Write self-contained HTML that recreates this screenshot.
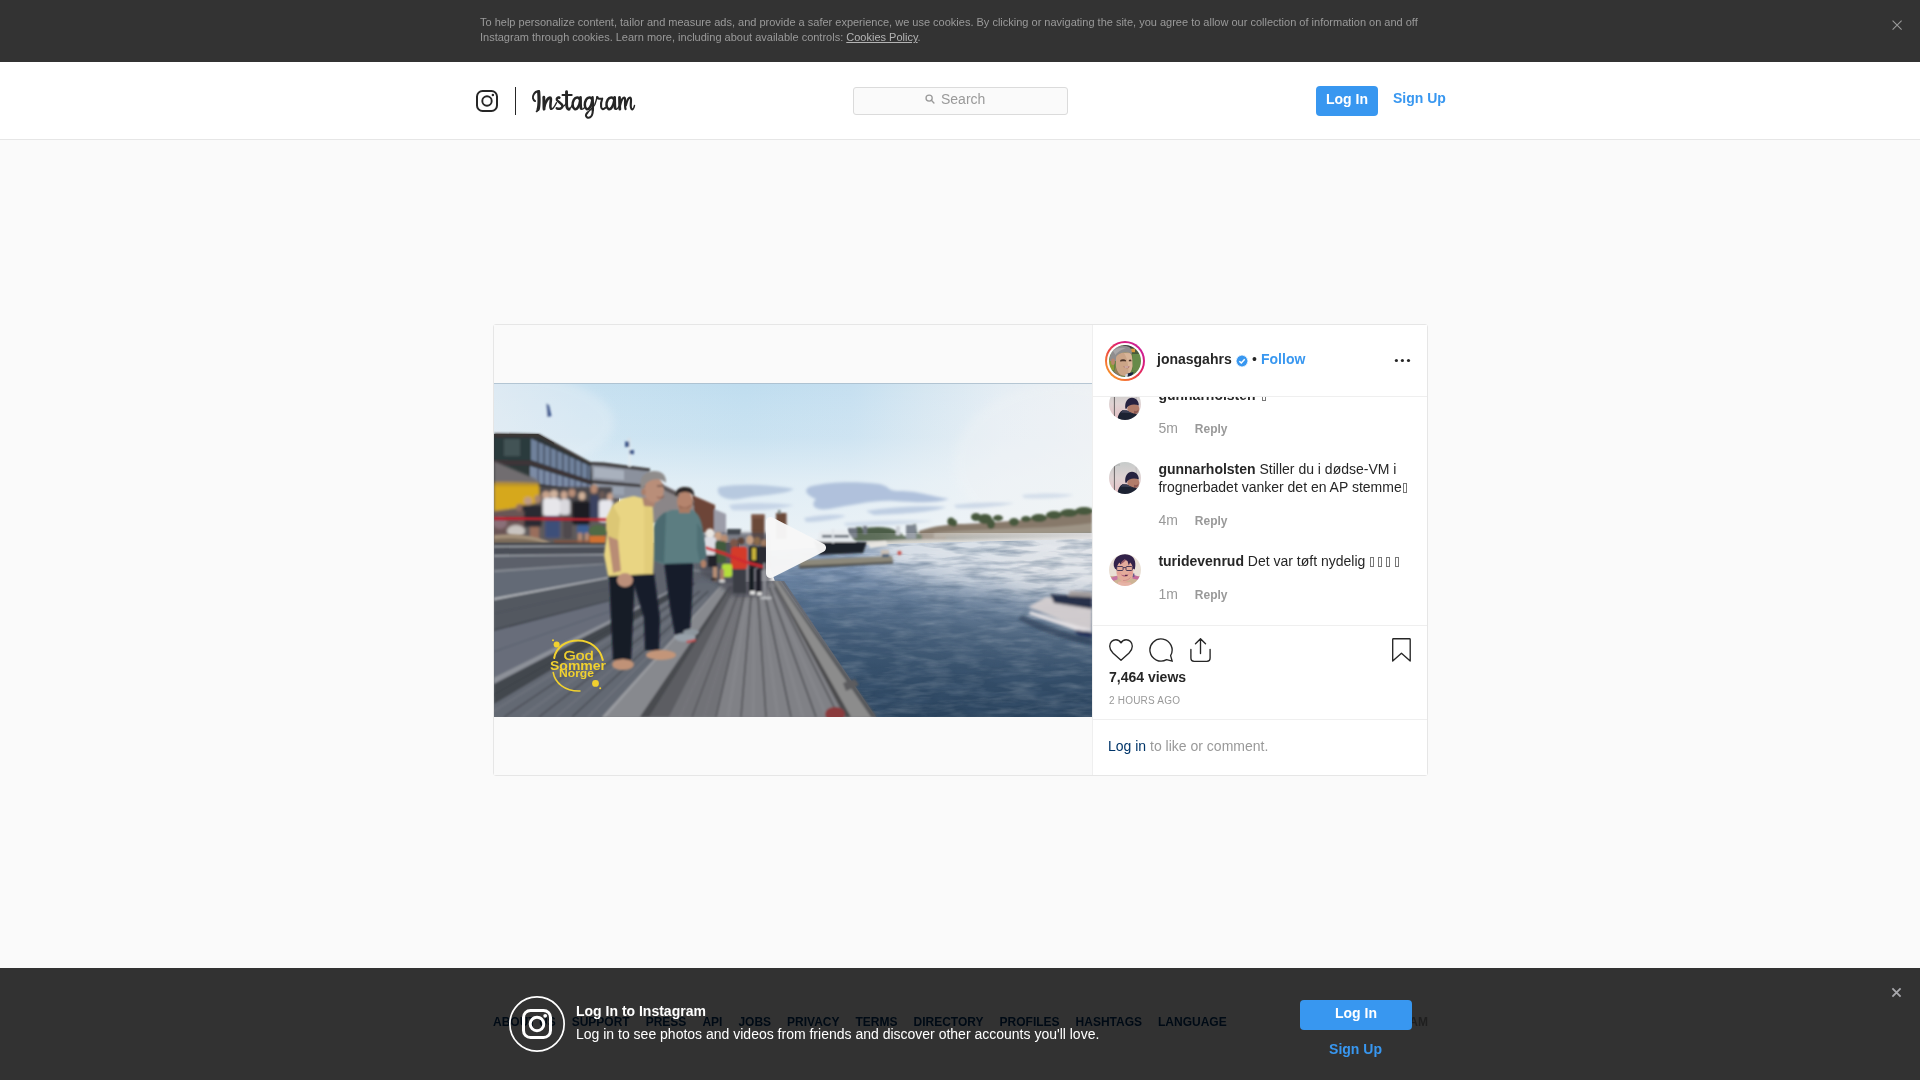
<!DOCTYPE html>
<html lang="en">
<head>
<meta charset="utf-8">
<title>Instagram</title>
<style>
*{box-sizing:border-box;margin:0;padding:0}
html,body{width:1920px;height:1080px;overflow:hidden;background:#fafafa;font-family:"Liberation Sans",sans-serif;color:#262626;font-size:14px;line-height:18px}
.abs{position:absolute}
#page{will-change:transform;position:relative;width:1920px;height:1080px;overflow:hidden;background:#fafafa}
/* cookie banner */
#cookie{left:0;top:0;width:1920px;height:62px;background:#333}
#cookie p{position:absolute;left:480px;top:15px;width:960px;font-size:11px;line-height:15px;color:#9a9a9a;white-space:nowrap}
#cookie p u{color:#b4b4b4}
/* nav */
#nav{left:0;top:62px;width:1920px;height:78px;background:#fff;border-bottom:1px solid #e6e6e6}
#search{left:853px;top:87px;width:215px;height:28px;background:#fafafa;border:1px solid #dbdbdb;border-radius:3px}
#search span{position:absolute;left:87px;top:2px;font-size:14px;line-height:18px;color:#999}
#login{left:1316px;top:86px;width:62px;height:30px;background:#3897f0;border-radius:4px;color:#fff;font-weight:700;font-size:14px;line-height:18px;text-align:center;padding-top:4px}
#signup{left:1393px;top:89px;color:#3897f0;font-weight:700;font-size:14px;line-height:18px}
/* card */
#card{left:493px;top:324px;width:935px;height:452px;background:#fff;border:1px solid #e6e6e6;border-radius:3px}
#media{left:494px;top:325px;width:598px;height:450px;background:#fafafa}
#side{left:1092px;top:325px;width:335px;height:450px;background:#fff;border-left:1px solid #efefef}
.hr{height:1px;background:#efefef;left:1093px;width:334px}
.b{font-weight:700}
.g{color:#999}
.av{width:32px;height:32px;border-radius:50%;overflow:hidden;left:1109px}
.t{left:1158.4px;white-space:nowrap;font-size:14px;line-height:18px;color:#262626}
.meta{left:1158.4px;white-space:nowrap;font-size:14px;line-height:18px;color:#999}
.meta b{font-size:12px;margin-left:12px}
.tofu{display:inline-block;width:4px;height:10px;border:1px solid #777;margin:0 2.1px 0 2.1px;vertical-align:-1px}
/* footer */
#footer{left:493px;top:1015px;width:935px;font-size:12px;line-height:14px;font-weight:700;color:#003569;white-space:nowrap}
#footer span{margin-right:16px}
#copy{right:492px;top:1015px;font-size:12px;line-height:14px;font-weight:700;color:#999;white-space:nowrap}
#bar{left:0;top:968px;width:1920px;height:112px;background:rgba(0,0,0,.8)}
#bl{left:1300px;top:1000px;width:112px;height:30px;background:#3897f0;border-radius:4px;color:#fff;font-weight:700;font-size:14px;line-height:18px;text-align:center;padding-top:4px}
#bs{left:1299.5px;top:1039.5px;width:112px;text-align:center;color:#3897f0;font-weight:700;font-size:14px;line-height:18px}
</style>
</head>
<body>
<div id="page">
<svg width="0" height="0" style="position:absolute"><defs><filter id="ab" x="-10%" y="-10%" width="120%" height="120%"><feGaussianBlur stdDeviation="0.55"/></filter><filter id="ab2" x="-10%" y="-10%" width="120%" height="120%"><feGaussianBlur stdDeviation="1.1"/></filter>
<linearGradient id="g2" x1="0" x2="0" y1="0" y2="1"><stop offset="0" stop-color="#c6cbca"/><stop offset=".5" stop-color="#dfd3d3"/><stop offset="1" stop-color="#e6bfc4"/></linearGradient></defs></svg>

<!-- COOKIE BANNER -->
<div id="cookie" class="abs">
<p>To help personalize content, tailor and measure ads, and provide a safer experience, we use cookies. By clicking or navigating the site, you agree to allow our collection of information on and off<br>Instagram through cookies. Learn more, including about available controls: <u>Cookies Policy</u>.</p>
<svg class="abs" style="left:1891px;top:19px" width="12" height="12" viewBox="0 0 12 12"><path d="M1.600 1.600L10.600 10.600M10.600 1.600L1.600 10.600" stroke="#9a9a9a" stroke-width="1.100" fill="none"/></svg>
</div>

<!-- NAV -->
<div id="nav" class="abs"></div>
<!--LOGO-->
<svg class="abs" style="left:476px;top:90px" width="22" height="22" viewBox="0 0 22 22"><rect x="1" y="1" width="20" height="20" rx="5.6" fill="none" stroke="#262626" stroke-width="2"/><circle cx="11" cy="11" r="4.7" fill="none" stroke="#262626" stroke-width="1.9"/><circle cx="16.9" cy="5.1" r="1.25" fill="#262626"/></svg>
<div class="abs" style="left:515px;top:87px;width:1px;height:28px;background:#262626"></div>
<svg class="abs" id="wordmark" style="left:528px;top:84px" width="112" height="40" viewBox="0 0 3024 1080" fill="none" stroke="#262626" stroke-linecap="round" stroke-linejoin="round">
<!-- I -->
<path stroke-width="86" d="M288 206C298 330 300 520 290 600C286 640 280 664 272 684"/><path stroke-width="52" d="M282 650C272 700 256 728 234 738"/>
<path stroke-width="50" d="M192 462C130 430 112 350 156 276C188 218 246 192 296 196"/>
<!-- n -->
<path stroke-width="78" d="M426 356C432 450 426 600 434 680"/>
<path stroke-width="70" d="M440 610C474 480 544 372 592 368C630 368 618 424 612 484C606 560 592 640 622 668"/>
<path stroke-width="38" d="M622 668C652 694 704 640 768 505"/>
<!-- s -->
<path stroke-width="66" d="M846 368C800 352 764 392 782 432C812 484 920 522 930 590C936 650 862 690 776 656"/>
<circle cx="842" cy="368" r="30" fill="#262626" stroke="none"/>
<path stroke-width="34" d="M932 612C972 600 1004 570 1032 520"/>
<!-- t -->
<path stroke-width="78" d="M1040 206C1046 300 1036 500 1046 600C1052 660 1082 688 1110 678"/>
<path stroke-width="38" d="M1110 678C1142 668 1172 620 1192 572"/>
<path stroke-width="52" d="M930 298L1180 298"/>
<!-- a -->
<path stroke-width="68" d="M1398 424C1378 352 1290 334 1240 424C1190 512 1192 640 1262 678C1322 698 1390 600 1408 452"/>
<path stroke-width="76" d="M1416 360C1422 450 1410 600 1432 658"/>
<path stroke-width="38" d="M1432 658C1448 694 1484 688 1524 636"/>
<g transform="translate(1404 0)">
<!-- g -->
<path stroke-width="68" d="M326 424C306 352 216 334 166 424C116 512 116 640 182 678C242 698 310 600 330 452"/>
<path stroke-width="68" d="M338 360C346 480 350 600 344 700"/><path stroke-width="56" d="M345 680C346 730 342 770 336 800C320 890 250 930 196 904C144 878 150 826 204 770"/>
<path stroke-width="38" d="M204 770C262 712 340 660 398 560C428 484 448 404 460 356"/>
<!-- r -->
<circle cx="466" cy="360" r="34" fill="#262626" stroke="none"/>
<path stroke-width="56" d="M474 384C522 402 572 402 600 396C580 450 560 550 570 620C580 688 640 700 690 640"/>
<!-- a2 -->
<path stroke-width="68" d="M918 424C898 352 800 334 750 424C700 512 702 640 772 678C832 698 900 600 924 452"/>
<path stroke-width="76" d="M934 360C940 450 930 600 950 658"/>
<path stroke-width="38" d="M950 658C968 694 1010 688 1050 610"/>
<!-- m -->
<path stroke-width="76" d="M1066 360C1072 450 1066 600 1076 680"/>
<path stroke-width="60" d="M1082 570C1112 452 1152 368 1196 368C1232 372 1216 450 1216 520C1216 600 1216 650 1230 676"/>
<path stroke-width="60" d="M1238 570C1268 452 1312 368 1352 368C1392 372 1376 450 1372 520C1366 600 1372 676 1410 684"/>
<path stroke-width="38" d="M1410 684C1440 684 1462 626 1472 580"/>
</g>
</svg>
<!--/LOGO-->
<div id="search" class="abs">
<svg class="abs" style="left:70.6px;top:5.6px" width="10.300" height="10.300" viewBox="0 0 12 12"><circle cx="4.8" cy="4.8" r="3.6" fill="none" stroke="#999" stroke-width="1.5"/><path d="M7.4 7.4L10.4 10.4" stroke="#999" stroke-width="1.6" stroke-linecap="round"/></svg>
<span>Search</span></div>
<div id="login" class="abs">Log In</div>
<div id="signup" class="abs">Sign Up</div>

<!-- CARD -->
<div id="card" class="abs"></div>
<div id="media" class="abs"></div>
<!--PHOTO-->
<svg class="abs" id="photo" style="left:494px;top:383px" width="598" height="334" viewBox="0 0 598 334" preserveAspectRatio="none">
<defs>
<linearGradient id="skyh" x1="0" x2="1" y1="0" y2="0"><stop offset="0" stop-color="#d4e5f1"/><stop offset=".15" stop-color="#c6e0f0"/><stop offset=".42" stop-color="#bfddef"/><stop offset=".6" stop-color="#c5dff0"/><stop offset=".72" stop-color="#d5e6f1"/><stop offset=".85" stop-color="#e4edf4"/><stop offset="1" stop-color="#ebf0f4"/></linearGradient>
<linearGradient id="skyv" x1="0" x2="0" y1="0" y2="1"><stop offset="0" stop-color="#fff" stop-opacity="0"/><stop offset=".3" stop-color="#f2f6f8" stop-opacity=".2"/><stop offset=".55" stop-color="#f0f5f8" stop-opacity=".66"/><stop offset="1" stop-color="#f1f4f6" stop-opacity=".95"/></linearGradient>
<linearGradient id="wat" x1="0" x2="0" y1="0" y2="1"><stop offset="0" stop-color="#a9bbd2"/><stop offset=".12" stop-color="#8299b8"/><stop offset=".3" stop-color="#5a7493"/><stop offset=".55" stop-color="#3e5874"/><stop offset="1" stop-color="#2a435d"/></linearGradient>
<linearGradient id="watr" x1="0" x2="1" y1="0" y2="0"><stop offset="0" stop-color="#fff" stop-opacity="0"/><stop offset=".35" stop-color="#fff" stop-opacity=".12"/><stop offset="1" stop-color="#e6e6ea" stop-opacity=".85"/></linearGradient>
<linearGradient id="watfade" x1="0" x2="0" y1="0" y2="1"><stop offset="0" stop-color="#fff" stop-opacity="1"/><stop offset=".12" stop-color="#fff" stop-opacity=".85"/><stop offset=".4" stop-color="#fff" stop-opacity=".3"/><stop offset=".75" stop-color="#fff" stop-opacity="0"/></linearGradient>
<mask id="wm"><rect x="280" y="150" width="320" height="190" fill="url(#watfade)"/></mask>
<filter id="b1" x="-5%" y="-5%" width="110%" height="110%"><feGaussianBlur stdDeviation="0.85"/></filter>
<filter id="b2" x="-10%" y="-10%" width="120%" height="120%"><feGaussianBlur stdDeviation="1.6"/></filter>
<filter id="b12" x="-30%" y="-60%" width="160%" height="220%"><feGaussianBlur stdDeviation="12"/></filter>
<filter id="b4" x="-20%" y="-20%" width="140%" height="140%"><feGaussianBlur stdDeviation="4"/></filter>
<filter id="rip" x="0" y="0" width="100%" height="100%"><feTurbulence type="fractalNoise" baseFrequency="0.035 0.16" numOctaves="3" seed="4" result="n"/><feColorMatrix type="matrix" values="0 0 0 0 1  0 0 0 0 1  0 0 0 0 1  1.6 0 0 0 -0.62"/></filter>
<filter id="ripd" x="0" y="0" width="100%" height="100%"><feTurbulence type="fractalNoise" baseFrequency="0.03 0.14" numOctaves="3" seed="11" result="n"/><feColorMatrix type="matrix" values="0 0 0 0 0.05  0 0 0 0 0.1  0 0 0 0 0.18  1.8 0 0 0 -0.75"/></filter>
<filter id="wood" x="0" y="0" width="100%" height="100%"><feTurbulence type="fractalNoise" baseFrequency="0.02 0.5" numOctaves="2" seed="3"/><feColorMatrix type="matrix" values="0 0 0 0 0  0 0 0 0 0  0 0 0 0 0  0.9 0 0 0 -0.35"/></filter>
<clipPath id="pc"><rect width="598" height="334"/></clipPath>
</defs>
<g clip-path="url(#pc)">
<rect width="598" height="180" fill="url(#skyh)"/>
<rect width="598" height="180" fill="url(#skyv)"/>
<ellipse cx="10" cy="40" rx="110" ry="50" fill="#eef3f7" opacity=".35" filter="url(#b4)"/>
<ellipse cx="570" cy="80" rx="110" ry="80" fill="#f3f4f5" opacity=".3" filter="url(#b4)"/>
<g filter="url(#b2)" fill="#adbfda">
<path d="M318 103C335 99 360 98 385 101C398 104 392 108 405 108C425 108 430 112 455 116C440 121 420 119 400 118C380 117 360 122 335 126C320 128 316 122 322 116C312 112 308 106 318 103Z" opacity=".95"/>
<path d="M372 128C395 124 430 122 452 124C440 129 410 131 380 132Z" opacity=".7"/>
<path d="M310 135C330 131 345 131 352 133C340 137 322 139 312 139Z" opacity=".6"/>
<path d="M225 104C250 100 280 102 300 106C290 112 262 112 245 116C232 118 220 112 225 104Z" opacity=".8"/>
<path d="M235 122C255 119 280 120 300 122C285 127 255 128 238 127Z" opacity=".55"/>
<path d="M460 122C480 119 500 119 520 120C505 124 480 126 462 125Z" opacity=".5"/>
<path d="M528 112C545 110 565 110 580 112C565 116 545 116 530 115Z" opacity=".4"/>
<path d="M350 140C380 137 420 137 440 138C420 141 380 143 352 143Z" opacity=".45"/>
</g>
<g filter="url(#b1)">
<path d="M425 158L425 148C440 143 455 141 470 141C490 140 510 139 528 137C545 135 560 132 575 130C585 129 592 128 598 127L598 160Z" fill="#87796a"/>
<path d="M440 150C470 146 520 146 560 144C575 143 590 141 598 140L598 150C570 152 500 154 440 155Z" fill="#a1978a" opacity=".9"/>
<path d="M452 153C490 151 560 151 598 149L598 157L452 158Z" fill="#8f8f86"/>
<ellipse cx="491" cy="136" rx="7" ry="5" fill="#47593d"/>
<ellipse cx="482" cy="134" rx="5" ry="4" fill="#47593d"/>
<ellipse cx="497" cy="141" rx="4" ry="5" fill="#47593d"/>
<ellipse cx="520" cy="139" rx="5" ry="4" fill="#47593d"/>
<ellipse cx="545" cy="135" rx="8" ry="4" fill="#47593d"/>
<ellipse cx="560" cy="132" rx="8" ry="4" fill="#47593d"/>
<ellipse cx="575" cy="130" rx="9" ry="4" fill="#47593d"/>
<ellipse cx="590" cy="128" rx="9" ry="4" fill="#47593d"/>
<ellipse cx="532" cy="136" rx="5" ry="3" fill="#47593d"/>
<ellipse cx="504" cy="135" rx="5" ry="3" fill="#47593d"/>
<ellipse cx="460" cy="140" rx="3" ry="3.5" fill="#47593d"/>
<ellipse cx="457" cy="138.5" rx="3.6" ry="4" fill="#44563a"/>
<path d="M355 158L355 146L362 146L362 144L368 144L368 146C375 144 385 143 395 145C402 147 408 150 410 153L413 153L413 143L422 141L423 150L428 152L428 158Z" fill="#4c5d47"/>
<rect x="354" y="145" width="9" height="10" fill="#6e7580"/><rect x="412" y="142" width="10" height="14" fill="#7d8590"/><rect x="402" y="143" width="4" height="9" fill="#c9ced4"/><rect x="369" y="143" width="4" height="8" fill="#70767f"/>
<path d="M372 159C400 157 430 156 460 157L598 154L598 158L372 162Z" fill="#c9c7c0"/>
</g>
<path d="M270 168L300 166L360 162L470 159L598 156L598 334L330 334Z" fill="url(#wat)"/>
<rect x="270" y="150" width="328" height="184" fill="url(#watr)" mask="url(#wm)"/>
<g clip-path="url(#wc)">
</g>
<clipPath id="wc"><path d="M270 168L300 166L360 162L470 159L598 156L598 334L330 334Z"/></clipPath>
<g clip-path="url(#wc)"><ellipse cx="585" cy="166" rx="210" ry="42" fill="#dfe4ea" opacity=".85" filter="url(#b12)"/><ellipse cx="600" cy="180" rx="90" ry="36" fill="#e3e5e9" opacity=".6" filter="url(#b12)"/></g>
<g clip-path="url(#wc)"><rect x="270" y="156" width="328" height="178" filter="url(#rip)" opacity=".22"/><rect x="270" y="156" width="328" height="178" filter="url(#ripd)" opacity=".6"/></g>
<g filter="url(#b1)">
<path d="M320 158L373 159L369 170L325 172Z" fill="#1f242c"/>
<path d="M326 148L352 147L362 159L323 159Z" fill="#e7ebef"/><rect x="328" y="152" width="27" height="2.4" fill="#4b5460"/><rect x="338" y="146" width="2" height="14" fill="#dfe3e8"/>
<path d="M374 160L392 158L394 163L376 165Z" fill="#e8e6e2"/>
</g>
<g filter="url(#b1)"><path d="M304 177L398 173L399 179L306 184Z" fill="#8d897c"/><path d="M304 183L399 178.5L399 180.5L306 185.5Z" fill="#4c4c48"/><rect x="387" y="167" width="8" height="6" fill="#c9c0b6"/><rect x="388" y="171" width="7" height="3" fill="#44607a"/><circle cx="405.5" cy="170" r="2" fill="#c8453c"/></g>
<g filter="url(#b2)" opacity=".92"><path d="M528 232C545 240 570 250 598 256L598 262C565 256 540 246 524 236Z" fill="#1c2f47" opacity=".55"/><path d="M534 224L552 214L598 222L598 246L584 244Z" fill="#d8d1d2"/><path d="M556 211L598 214L598 226L560 220Z" fill="#1d2740"/><path d="M576 208L598 209L598 214L574 213Z" fill="#a39b9a"/><path d="M537 228L584 243L598 246L598 249L582 247.500L534 231Z" fill="#f0eaeb"/><path d="M580 247L598 249L598 255L584 252Z" fill="#1b2a55"/></g>
<path d="M0 51L44 51L60 60L60 160L0 160Z" fill="#343638"/>
<path d="M0 100L125 104L125 162L0 162Z" fill="#5d585b"/>
<path d="M0 160L245 160L245 200L290 198L382 334L0 334Z" fill="#686c75"/>
<path d="M227 200L287 198L380 334L108 334Z" fill="#7e7f84"/>
<g filter="url(#b1)">
<path d="M198 112L212 118L221 122L221 150L198 150Z" fill="#6d4538"/>
<path d="M220 126L232 131L232 152L220 152Z" fill="#9b9ca8"/>
<rect x="233" y="146" width="14" height="6" fill="#3f4650"/>
<rect x="247" y="149" width="12" height="4" fill="#d9dde2"/>
<rect x="257.5" y="131.5" width="13" height="30" fill="#6a4839"/><rect x="257.5" y="131.5" width="13" height="4" fill="#7a5545"/>
<rect x="282" y="130" width="10.5" height="26" fill="#6a4839"/><rect x="284" y="127" width="2.5" height="4" fill="#75807d"/>
<path d="M133 90L150 92L182 108L200 118L200 140L133 140Z" fill="#8b8688"/>
<path d="M150 93L182 109L200 119L200 123L182 113L150 97Z" fill="#5a5556"/>
<path d="M96 79L110 80L156 86L156 120L96 112Z" fill="#8b919d"/>
<path d="M96 79L110 79.5L156 85.5L156 88.5L110 83L96 82Z" fill="#3d3a3b"/>
<path d="M98 97L156 102L156 105L98 100.5Z" fill="#3f3d40"/>
<path d="M100 84L130 87.5L130 97L100 94.5Z" fill="#a9b1bd"/><path d="M100 102L130 104L130 112L100 110Z" fill="#9aa3b0"/>
<path d="M0 50.5L45 51L97 79.5L99 110L45 101L0 101Z" fill="#2f3437"/>
<path d="M0 50.5L45 51L97 79.5L97 82L45 54L0 53.5Z" fill="#3e3836"/>
<path d="M37 55.5L96 83L96 97L37 77Z" fill="#6f819b"/>
<path d="M0 55L37 55.5L37 77L0 77Z" fill="#2c3a3c"/><path d="M10 56L26 56L26 73L10 73Z" fill="#4d5d60" opacity=".7"/>
<path d="M0 77L37 77.5L97 97.5L97 101L37 82L0 82Z" fill="#3d3637"/>
<path d="M36 83L97 102L98 110L36 99Z" fill="#7c8ba5"/>
<path d="M12 82L36 83L36 99L12 99Z" fill="#2e3838"/>
<path d="M44.0 58.8L44.0 79.5" stroke="#3c4656" stroke-width="1.3"/>
<path d="M44.0 85.5L44.0 101.0" stroke="#46506a" stroke-width="1.3"/>
<path d="M50.2 61.7L50.2 81.6" stroke="#3c4656" stroke-width="1.3"/>
<path d="M50.2 87.5L50.2 102.2" stroke="#46506a" stroke-width="1.3"/>
<path d="M56.4 64.6L56.4 83.7" stroke="#3c4656" stroke-width="1.3"/>
<path d="M56.4 89.4L56.4 103.3" stroke="#46506a" stroke-width="1.3"/>
<path d="M62.6 67.5L62.6 85.8" stroke="#3c4656" stroke-width="1.3"/>
<path d="M62.6 91.3L62.6 104.5" stroke="#46506a" stroke-width="1.3"/>
<path d="M68.8 70.4L68.8 87.9" stroke="#3c4656" stroke-width="1.3"/>
<path d="M68.8 93.3L68.8 105.6" stroke="#46506a" stroke-width="1.3"/>
<path d="M75.0 73.3L75.0 90.0" stroke="#3c4656" stroke-width="1.3"/>
<path d="M75.0 95.2L75.0 106.8" stroke="#46506a" stroke-width="1.3"/>
<path d="M81.2 76.2L81.2 92.1" stroke="#3c4656" stroke-width="1.3"/>
<path d="M81.2 97.2L81.2 107.9" stroke="#46506a" stroke-width="1.3"/>
<path d="M87.4 79.1L87.4 94.2" stroke="#3c4656" stroke-width="1.3"/>
<path d="M87.4 99.2L87.4 109.0" stroke="#46506a" stroke-width="1.3"/>
<path d="M93.6 82.0L93.6 96.3" stroke="#3c4656" stroke-width="1.3"/>
<path d="M93.6 101.1L93.6 110.2" stroke="#46506a" stroke-width="1.3"/>
<path d="M36 99L98 110L98 113L36 103Z" fill="#3b3a3e"/>
<rect x="134.6" y="56" width="1.8" height="28" fill="#e3e9ed"/><rect x="131" y="58.5" width="4.2" height="5.5" fill="#40598a"/><rect x="135.6" y="67" width="4.4" height="4.2" fill="#40598a"/><rect x="133.5" y="55" width="3" height="2" fill="#d5dde4"/>
<path d="M52.5 21L55 22L57.5 33L53.5 34Z" fill="#3b548c"/><path d="M52.5 20L53.3 20L53.8 34L53 34Z" fill="#9aa8bd"/>
</g>
<g filter="url(#b2)">
<path d="M0 78L14 84L42 96L46 101L0 101Z" fill="#716d6f"/>
<rect x="0" y="118" width="122" height="44" fill="#5f5a5c"/>
<rect x="40" y="104" width="78" height="16" fill="#4a474b"/>
<path d="M0 99L45 100L46 119L22 125L0 128Z" fill="#d6a81c"/>
<path d="M0 99L45 100L45 103L0 103Z" fill="#b7912c"/>
<ellipse cx="52" cy="112" rx="4" ry="4" fill="#c9a48d"/>
<ellipse cx="60" cy="111" rx="4" ry="4" fill="#d2b49e"/>
<ellipse cx="70" cy="112" rx="3.5" ry="4" fill="#caa58f"/>
<ellipse cx="78" cy="110" rx="3.5" ry="4" fill="#b98f78"/>
<ellipse cx="88" cy="113" rx="3.5" ry="4" fill="#d2b29a"/>
<ellipse cx="100" cy="106" rx="3.5" ry="4.5" fill="#b88a72"/>
<ellipse cx="108" cy="112" rx="3" ry="4" fill="#6b5a55"/>
<ellipse cx="116" cy="114" rx="3" ry="4" fill="#c6a08a"/>
<ellipse cx="34" cy="118" rx="4" ry="4" fill="#bf9b86"/>
<ellipse cx="44" cy="116" rx="3.5" ry="4" fill="#a58370"/>
<ellipse cx="26" cy="125" rx="4" ry="4" fill="#8c6b5e"/>
<rect x="49" y="115" width="17" height="18" rx="3" fill="#e7e6ea"/>
<rect x="66" y="116" width="10" height="16" rx="3" fill="#d9d8dd"/>
<rect x="78" y="118" width="18" height="24" rx="3" fill="#1d1e22"/>
<rect x="96" y="112" width="9" height="24" rx="3" fill="#3a4360"/>
<rect x="105" y="117" width="14" height="22" rx="3" fill="#e6e6ec"/>
<rect x="28" y="122" width="20" height="22" rx="3" fill="#2c2b33"/>
<rect x="51" y="133" width="15" height="22" rx="2" fill="#3d4f79"/>
<rect x="83" y="142" width="12" height="9" rx="2" fill="#3e5f93"/>
<rect x="69" y="132" width="9" height="24" rx="2" fill="#504a4e"/>
<rect x="84" y="150" width="4" height="11" fill="#b58c76"/><rect x="91" y="150" width="4" height="11" fill="#b58c76"/>
<rect x="36" y="144" width="9" height="14" fill="#9a6e5c"/>
<rect x="0" y="128" width="30" height="26" fill="#6a5455"/>
<ellipse cx="22" cy="148" rx="9" ry="6" fill="#c9c4c0"/>
<ellipse cx="6" cy="140" rx="7" ry="6" fill="#8a6f78"/>
</g>
<g filter="url(#b1)">
<path d="M0 152C20 150 42 152 57 160L0 161Z" fill="#a39079"/><path d="M0 156C20 154 40 156 52 161L0 161Z" fill="#7d6d5b"/>
<ellipse cx="104" cy="148" rx="9" ry="6" fill="#4f6a45"/><path d="M95 153L112 153L111 163L96 163Z" fill="#cf6f33"/>
<rect x="60" y="157" width="36" height="5" fill="#8a4f33" opacity=".6"/>
<path d="M0 134L60 134.5L117 135.5L117 138L60 137.5L0 137Z" fill="#b9232f"/>
</g>
<g filter="url(#b1)">
<path d="M0 160L240 160L240 200L117 240L0 295Z" fill="#5f6570"/>
<path d="M0 160L125 160L125 163L0 163.5Z" fill="#40434a"/>
<path d="M0 163.5L115 163L113 171.5L0 172.6Z" fill="#4c5058"/>
<path d="M0 172.6L113 171.5L112 181L0 188Z" fill="#5b606a"/>
<path d="M0 188L112 181L116 194.5L0 216Z" fill="#646a76"/>
<path d="M0 216L116 194.5L118 217L0 247Z" fill="#535861"/>
<path d="M0 247L118 217L119 240L0 294.5Z" fill="#676d7a"/>
<path d="M0 162.8L112 162.4L112 163.6L0 164.2Z" fill="#a9adb3"/>
<path d="M0 172L110 171L110 172.2L0 173.4Z" fill="#a3a7ae"/>
<path d="M0 187.2L70 182.8L110 180.5L110 181.6L0 189Z" fill="#8c9098"/>
<path d="M0 215L60 204L115 194L115 195.2L0 217.2Z" fill="#b5b8bd"/>
<path d="M0 246.4L118 216.6L118 217.6L0 248Z" fill="#3f434a"/>
<path d="M0 230L117 205L117 205.8L0 231Z" fill="#4a4e55" opacity=".7"/>
<path d="M0 268L118 227L118 228L0 269.2Z" fill="#585e69" opacity=".8"/>
<path d="M112 161L240 161L240 200L208 194.5L117 240Z" fill="#5e636d"/>
<path d="M160 172L240 176L240 178L160 174Z" fill="#7d828a"/>
<path d="M196 186L240 190L240 191.5L196 188Z" fill="#80858d"/>
</g>
<g filter="url(#b1)">
<path d="M0 294.5L190.5 200.0L229.3 200.0L108 334L0 334Z" fill="#646973"/>
<path d="M0 294.5L190.5 200.0L193.8 200.0L0 301Z" fill="#8d9199"/>
<path d="M0 301L193.8 200.0L202.4 200.0L0 321Z" fill="#42464d"/>
<path d="M184.4 208.0L-40 334" stroke="#41454c" stroke-width="1.3" opacity=".85"/>
<path d="M197.1 208.0L10 334" stroke="#41454c" stroke-width="1.3" opacity=".85"/>
<path d="M206.0 208.0L45 334" stroke="#41454c" stroke-width="1.3" opacity=".85"/>
<path d="M214.4 208.0L78 334" stroke="#41454c" stroke-width="1.3" opacity=".85"/>
<path d="M182.4 214.0L-10 334" stroke="#7f848d" stroke-width="1.6" opacity=".4"/>
<path d="M193.4 214.0L28 334" stroke="#7f848d" stroke-width="1.6" opacity=".4"/>
<path d="M203.3 214.0L62 334" stroke="#7f848d" stroke-width="1.6" opacity=".4"/>
<path d="M212.6 214.0L94 334" stroke="#7f848d" stroke-width="1.6" opacity=".4"/>
<path d="M229.3 200.0L284.2 198.0L380 334L108 334Z" fill="#808186"/>
<path d="M229.3 200.0L237.2 200.0L146 334L108 334Z" fill="#87898e"/>
<path d="M229.3 200.0L230.1 200.0L112 334L108 334Z" fill="#9a9ca1"/>
<path d="M235.1 203.0L241.7 203.0L175 334L146 334Z" fill="#5c5d62"/>
<path d="M235.1 203.0L237.2 203.0L155 334L146 334Z" fill="#4a4b50"/>
<path d="M246.5 204.0L198 334" stroke="#4a4b4f" stroke-width="1.5" opacity=".9"/>
<path d="M252.0 204.0L222 334" stroke="#4a4b4f" stroke-width="1.5" opacity=".9"/>
<path d="M257.8 204.0L247 334" stroke="#4a4b4f" stroke-width="1.5" opacity=".9"/>
<path d="M263.5 204.0L272 334" stroke="#4a4b4f" stroke-width="1.5" opacity=".9"/>
<path d="M269.3 204.0L297 334" stroke="#4a4b4f" stroke-width="1.5" opacity=".9"/>
<path d="M275.1 204.0L322 334" stroke="#4a4b4f" stroke-width="1.5" opacity=".9"/>
<path d="M280.4 204.0L345 334" stroke="#4a4b4f" stroke-width="1.5" opacity=".9"/>
<path d="M240.1 212.0L186 334" stroke="#909196" stroke-width="3" opacity=".35"/>
<path d="M246.8 212.0L210 334" stroke="#909196" stroke-width="3" opacity=".35"/>
<path d="M253.5 212.0L234 334" stroke="#909196" stroke-width="3" opacity=".35"/>
<path d="M260.4 212.0L259 334" stroke="#909196" stroke-width="3" opacity=".35"/>
<path d="M267.4 212.0L284 334" stroke="#909196" stroke-width="3" opacity=".35"/>
<path d="M274.3 212.0L309 334" stroke="#909196" stroke-width="3" opacity=".35"/>
<path d="M281.0 212.0L333 334" stroke="#909196" stroke-width="3" opacity=".35"/>
<path d="M241.7 203.0L252.2 203.0L222 334L175 334Z" fill="#5f6065" opacity=".45"/>
<path d="M278.8 198.0L284.2 198.0L380 334L352 334Z" fill="#8c8c8c"/>
<path d="M278.6 198.0L279.7 198.0L357 334L351 334Z" fill="#4b4b4d"/>
<path d="M283.7 198.0L284.8 198.0L383 334L377 334Z" fill="#56585b"/>
<path d="M349 300L361 296L365 302L352 308Z" fill="#5b5b5e"/>
<ellipse cx="341" cy="331" rx="10" ry="7" fill="#8a3b3d"/>
</g>
<g filter="url(#b1)">
<path d="M206 150L275 150L277 196L270 214L240 214L222 200L206 190Z" fill="#4a4c55" opacity=".7" filter="url(#b2)"/>
<ellipse cx="216" cy="150" rx="4.5" ry="4.5" fill="#e9e6e2"/>
<ellipse cx="224" cy="153" rx="3.5" ry="4" fill="#c9a184"/>
<ellipse cx="230" cy="156" rx="3.5" ry="4" fill="#b98d72"/>
<ellipse cx="240" cy="160" rx="4" ry="4" fill="#7a5748"/>
<ellipse cx="247" cy="158" rx="3.5" ry="3.5" fill="#5a4238"/>
<ellipse cx="256" cy="157" rx="3.5" ry="4" fill="#c8a184"/>
<ellipse cx="263" cy="158" rx="3.5" ry="4" fill="#8a6a4c"/>
<ellipse cx="270" cy="160" rx="3" ry="3.5" fill="#a07c62"/>
<rect x="210" y="154" width="12" height="18" rx="3" fill="#dcdde3"/>
<rect x="221" y="158" width="11" height="22" rx="3" fill="#3f5a3c"/>
<rect x="214" y="172" width="9" height="12" fill="#22242c"/>
<rect x="237" y="164" width="16" height="22" rx="3" fill="#d43b2a"/>
<rect x="228" y="181" width="10" height="13" rx="2" fill="#b4dd3a"/>
<rect x="255" y="163" width="9" height="22" rx="2" fill="#1e2026"/><rect x="258" y="165" width="4" height="12" fill="#c9b23a"/>
<rect x="264" y="163" width="9" height="24" rx="2" fill="#2b2c33"/>
<rect x="239" y="186" width="13" height="24" fill="#3a3c45"/>
<rect x="255" y="185" width="5" height="25" fill="#191b22"/><rect x="262" y="186" width="5" height="25" fill="#1c1e26"/>
<rect x="219" y="184" width="4" height="14" fill="#b68e75"/><rect x="226" y="186" width="4" height="12" fill="#a98068"/>
<rect x="256" y="208" width="5" height="3.5" fill="#e6e6e6"/><rect x="263" y="209" width="5" height="3.5" fill="#dddddd"/>
<rect x="269.5" y="180" width="2" height="34" fill="#9b9da3"/><ellipse cx="272" cy="215" rx="6" ry="1.6" fill="#b8babd"/>
<path d="M211 163L230 169L250 177L269 182.5L269 185L250 180L230 172L211 166Z" fill="#cf2a30"/>
<ellipse cx="220" cy="196" rx="3" ry="1.5" fill="#2a2a2e"/><ellipse cx="228" cy="198" rx="3" ry="1.5" fill="#d9d9d9"/>
</g>
<g filter="url(#b1)">
<path d="M170 178L199 178L198 215L196 250L181 252L176 225Z" fill="#141b2b"/>
<ellipse cx="191" cy="254.5" rx="10.5" ry="4.2" fill="#98a1aa"/><ellipse cx="197" cy="249" rx="8" ry="3" fill="#8e979f"/><path d="M192 258L202 256L202 258.5L193 260Z" fill="#c24a4a"/>
<path d="M159 146C161 136 168 130 178 127L198 127C205 130 208 138 209 148L212 172C211 178 207 181 203 180L168 181L159 177Z" fill="#5b7d81"/>
<path d="M159 146C161 138 166 132 172 129L170 180L159 177Z" fill="#4b6a6f"/>
<path d="M203 140L209 148L212 172L206 180L203 165Z" fill="#4f7075"/>
<ellipse cx="209.5" cy="181" rx="3" ry="4" fill="#b08068"/>
<ellipse cx="191" cy="118.5" rx="8" ry="10.5" fill="#b5846d"/>
<path d="M182 113C181 106 186 104 191 104C197 104 201 107 200 114C198 110 194 108.5 190 109C186 109.5 184 111 182 113Z" fill="#2c2725"/>
<path d="M185 123C188 126 194 126 197 122" stroke="#8a5a4a" stroke-width="1.2" fill="none"/>
<rect x="185" y="125" width="11" height="5" fill="#a87a64"/>
</g>
<g filter="url(#b1)">
<path d="M115 190L141 190L139 235L137 279L119 277L117 235Z" fill="#131a28"/>
<path d="M137 190L160 190L166 235L165 268L151 267L150 235L141 205Z" fill="#151c2b"/>
<ellipse cx="129" cy="281.5" rx="11" ry="5.5" fill="#c09277"/><ellipse cx="167" cy="272" rx="15" ry="5" fill="#c39579"/>
<path d="M119 122C124 117 132 114 140 113L152 116C157 118 159 122 159 128L160 160L159 191L114 193L110 172L113 150L112 135Z" fill="#e9d583"/>
<path d="M119 122C115 128 112 136 112 146L114 154L124 157L126 135Z" fill="#dcc774"/>
<path d="M150 120L159 128L160 160L159 191L150 191Z" fill="#e2cd7a"/>
<path d="M114 153L124 157L127 188L119 190Z" fill="#b88c75"/>
<ellipse cx="131" cy="197" rx="8" ry="7" fill="#bb8f7a"/>
<path d="M148 114L162 116L160 124L150 123Z" fill="#ad8470"/>
<ellipse cx="160" cy="107" rx="10" ry="12.5" fill="#b98e79"/>
<path d="M146.5 104C145 93 152 88 160 88C168 88 172.5 92 172 100C168 96 163 95.5 158 97C153 98.5 150 102 149 108C148 108 147 106 146.5 104Z" fill="#8f8c8b"/>
<ellipse cx="149.5" cy="109" rx="2.2" ry="3.5" fill="#a97f6b"/>
<path d="M163 103L169 103" stroke="#6b5248" stroke-width="1.4"/><path d="M163 114C166 116 168 115 170 113" stroke="#8a5d50" stroke-width="1.1" fill="none"/>
</g>
<g fill="none" stroke="#f1d12f" stroke-linecap="round"><path d="M60.2 275C62 264 72 257.4 84 257.4C96 257.4 106 265 108.8 277" stroke-width="2"/><path d="M59.2 289.5C61 300 71 308.5 86 308" stroke-width="1.5"/></g>
<g fill="#f1d12f"><circle cx="62.6" cy="261.6" r="3"/><circle cx="59" cy="257.2" r="1"/><circle cx="101.5" cy="300.4" r="3.4"/><circle cx="106.2" cy="305.2" r="1"/></g>
<g fill="#f1d12f" font-family="Liberation Sans, sans-serif" font-weight="700" text-anchor="middle"><text x="84.5" y="277" font-size="13" font-weight="400" stroke="#f1d12f" stroke-width=".35" textLength="30" lengthAdjust="spacingAndGlyphs">God</text><text x="84" y="287.2" font-size="12.5" textLength="56" lengthAdjust="spacingAndGlyphs">Sommer</text><text x="82.5" y="294.4" font-size="10.5" textLength="35" lengthAdjust="spacingAndGlyphs">Norge</text></g>
<g opacity=".97"><path d="M276.5 138.5L276.5 190.5L327.5 164.8Z" fill="#f8f8f8" stroke="#f8f8f8" stroke-width="9" stroke-linejoin="round"/></g>
<rect x="0" y="0" width="598" height="1" fill="#a9bccb" opacity=".8"/>
</g></svg>
<!--/PHOTO-->
<div id="side" class="abs"></div>

<!-- comments (clipped under header) -->
<div class="abs" style="left:1093px;top:397px;width:334px;height:228px;overflow:hidden">
 <div class="abs" style="left:-1093px;top:-397px;width:1920px;height:1080px">
  <div class="abs av" id="av1" style="top:388px"><svg width="32" height="32" viewBox="0 0 32 32"><g filter="url(#ab)"><rect width="32" height="32" fill="url(#g2)"/><rect x="4.900" y="0" width="1" height="32" fill="#6a6567"/><path d="M5.400 5C7 3 9 2.500 11 3" stroke="#8a8a8c" stroke-width=".5" fill="none"/><path d="M27 5L27.600 14" stroke="#aaa9ab" stroke-width=".5"/>
<ellipse cx="24.300" cy="20.800" rx="6" ry="5.600" fill="#b17c6b"/><path d="M25 22.500C26.500 23.500 28.500 23 29.500 21.500C29.500 24.500 27.500 26.300 25 26Z" fill="#8f5a52"/><path d="M21 25C24 27.300 28 26.500 30 23L30.500 27L24 29Z" fill="#8a7672"/>
<path d="M16.300 20.600C15.600 14 18.500 10 23 9.800C27.500 9.800 30 14 29.800 17.500C27 16 23 16 20.500 17.500C18.500 18.500 17.800 20 17.300 21Z" fill="#25223f"/>
<path d="M8.500 31C9 27 11 23.500 13.500 22.300L18 22.600C21 24.600 25 26 28.500 26.500L27 32L8 32Z" fill="#1d2133"/><path d="M13.500 22.300L18 22.600C20 24 22 25 24 25.600C20 25 16 24.500 12 25Z" fill="#3a3e52"/></g></svg></div>
  <div class="abs t" style="top:386px"><span class="b">gunnarholsten</span> <i class="tofu"></i></div>
  <div class="abs meta" style="top:419px">5m<b style="margin-left:17px">Reply</b></div>

  <div class="abs av" id="av2" style="top:462px"><svg width="32" height="32" viewBox="0 0 32 32"><g filter="url(#ab)"><rect width="32" height="32" fill="url(#g2)"/><rect x="4.900" y="0" width="1" height="32" fill="#6a6567"/><path d="M5.400 5C7 3 9 2.500 11 3" stroke="#8a8a8c" stroke-width=".5" fill="none"/><path d="M27 5L27.600 14" stroke="#aaa9ab" stroke-width=".5"/>
<ellipse cx="24.300" cy="20.800" rx="6" ry="5.600" fill="#b17c6b"/><path d="M25 22.500C26.500 23.500 28.500 23 29.500 21.500C29.500 24.500 27.500 26.300 25 26Z" fill="#8f5a52"/><path d="M21 25C24 27.300 28 26.500 30 23L30.500 27L24 29Z" fill="#8a7672"/>
<path d="M16.300 20.600C15.600 14 18.500 10 23 9.800C27.500 9.800 30 14 29.800 17.500C27 16 23 16 20.500 17.500C18.500 18.500 17.800 20 17.300 21Z" fill="#25223f"/>
<path d="M8.500 31C9 27 11 23.500 13.500 22.300L18 22.600C21 24.600 25 26 28.500 26.500L27 32L8 32Z" fill="#1d2133"/><path d="M13.500 22.300L18 22.600C20 24 22 25 24 25.600C20 25 16 24.500 12 25Z" fill="#3a3e52"/></g></svg></div>
  <div class="abs t" style="top:460px"><span class="b">gunnarholsten</span> Stiller du i dødse-VM i<br>frognerbadet vanker det en AP stemme<i class="tofu" style="margin:0 0 0 1px"></i></div>
  <div class="abs meta" style="top:511px">4m<b style="margin-left:17px">Reply</b></div>

  <div class="abs av" id="av3" style="top:554px"><svg width="32" height="32" viewBox="0 0 32 32"><g filter="url(#ab)"><rect width="32" height="32" fill="#e9dfd5"/><rect x="0" y="22" width="32" height="10" fill="#cdb395"/><path d="M1 24L8.500 21.500L8.500 25.500L2 27.500Z" fill="#c774a2"/><path d="M23.500 20.500L31 23L30 26L23.500 24.500Z" fill="#c46a9c"/><rect x="23.400" y="19.500" width="2" height="3.500" fill="#6a5a8a"/>
<path d="M7.200 13C7 8 11 5.500 16 5.500C21 5.500 24.600 8 24.400 14L24 21C23 25 20 27 16.500 27L22 29.500L24 32L8 32L9 28.500L12.500 26.500C9.500 25 7.800 22 7.500 19Z" fill="#e3ab9b"/><path d="M9.500 27.500C13 29 18 29.500 21 28L24 32L8 32Z" fill="#e6b3a6"/>
<path d="M4.800 12C4 5 9 0 16 0.200C23 0 27 5 26.300 12L25.800 15.600L23.800 14.500C23.500 11.500 22.500 9.500 21 8.500L19.800 11.500L18.500 7L15.600 5.400L13 7.500L11.500 10.500L10.500 8.500C9 10 8 12 7.600 15.500L6 14.800Z" fill="#33214a"/><path d="M11.500 10.500C12.500 7 15 5 17.500 5.500L15 8Z" fill="#7a4055" opacity=".8"/>
<g fill="none" stroke="#4c3b58" stroke-width="1"><rect x="7.700" y="12.500" width="6.400" height="4" rx="1"/><rect x="17" y="12.500" width="6.400" height="4" rx="1"/><path d="M14.100 13.600L17 13.600"/></g>
<ellipse cx="10" cy="19" rx="2.200" ry="1.500" fill="#e79a94" opacity=".7"/><ellipse cx="21.500" cy="19" rx="2.200" ry="1.500" fill="#e79a94" opacity=".7"/>
<path d="M12 20.500C14 21.500 17.500 21.500 19.500 20.300C18.500 23 14 23.500 12 20.500Z" fill="#b0607a"/><rect x="16" y="20.800" width="2.400" height="1.300" fill="#5a2a4a"/>
<path d="M14 26.500C17 26.800 20 25.500 21.500 23.500" stroke="#c98a86" stroke-width=".8" fill="none"/></g></svg></div>
  <div class="abs t" style="top:552px"><span class="b">turidevenrud</span> Det var tøft nydelig<i class="tofu" style="margin-left:4.6px"></i><i class="tofu"></i><i class="tofu"></i><i class="tofu"></i></div>
  <div class="abs meta" style="top:585px">1m<b style="margin-left:17px">Reply</b></div>
 </div>
</div>

<!-- post header -->
<div class="abs" id="ring" style="left:1105px;top:341px;width:40px;height:40px;border-radius:50%;background:linear-gradient(45deg,#f8902c 14%,#ee4b3f 42%,#dc1b74 64%,#c9219b 90%)"></div>
<div class="abs" style="left:1107px;top:343px;width:36px;height:36px;border-radius:50%;background:#fff"></div>
<div class="abs av" id="av0" style="top:345px"><svg width="32" height="32" viewBox="0 0 32 32"><g filter="url(#ab)"><rect width="32" height="32" fill="#5f8043"/><rect x="20" y="0" width="12" height="9" fill="#4a5a3a"/><rect x="22" y="3.8" width="4" height="3.4" fill="#d8963a"/><rect x="14" y="0" width="12" height="3" fill="#3a3f3a"/><rect x="0" y="15" width="5" height="10" fill="#8a9a35"/><rect x="24" y="9" width="8" height="16" fill="#668a49"/>
<path d="M1 16C0 6 7 0.5 15 0.8C21 1 23 4 23 9L21 8C16 6.5 10 8 8.5 11C7.5 13.5 7.5 15 7 16Z" fill="#8f8d8e"/><path d="M4 6C7 3 12 2 17 3C14 4.5 9 6 6.5 10Z" fill="#a9a7a8"/>
<path d="M7 13C7.5 9 13 7 19 7.6C22 8 23.2 10 23.2 14L23.4 21C23.2 26 20 30.5 15.5 31C11 31 7.5 27 6.8 21Z" fill="#cba487"/><path d="M15 8L22 8.5L23.2 14L23.4 21C23 25 21 28 19 29.5C20 24 19 14 15 8Z" fill="#dbb89c" opacity=".8"/>
<ellipse cx="4" cy="16.8" rx="1.9" ry="3.3" fill="#b9866d"/>
<path d="M11.2 15C13 13.8 15.5 13.9 17 15.2L16.8 16.6C15 16.2 13 16.3 11.4 16.8Z" fill="#4a3328"/><path d="M19.8 15C20.8 14.2 21.8 14.3 22.4 15L22.3 16.5C21.5 16.2 20.6 16.3 19.9 16.6Z" fill="#4a3328"/>
<path d="M14.2 21.6C16 20.8 19 20.8 20.6 21.4C20 23.6 16.5 24.2 14.2 21.6Z" fill="#a86660"/><path d="M15.4 21.6L19.6 21.5L19.2 22.5L15.9 22.6Z" fill="#e9e2da"/>
<path d="M7 21C7.5 27 11 31 15.500 31C13 32 9 31 5 27Z" fill="#a87c5f" opacity=".7"/>
<path d="M3 26L8 29L12 32L0 32L0 27Z" fill="#5a6278"/><path d="M18.500 28.500L24.500 27L23 31.500L17 32Z" fill="#1c2540"/><path d="M16.500 29.500L19 28.500L18.500 32L16 32Z" fill="#cfd3dc"/></g></svg></div>
<div class="abs t b" style="left:1157px;top:350px">jonasgahrs</div>
<svg class="abs" style="left:1236px;top:355px" width="12" height="12" viewBox="0 0 12 12"><polygon points="6.00,0.00 6.98,1.10 8.30,0.46 8.78,1.84 10.24,1.76 10.16,3.22 11.54,3.70 10.90,5.02 12.00,6.00 10.90,6.98 11.54,8.30 10.16,8.78 10.24,10.24 8.78,10.16 8.30,11.54 6.98,10.90 6.00,12.00 5.02,10.90 3.70,11.54 3.22,10.16 1.76,10.24 1.84,8.78 0.46,8.30 1.10,6.98 0.00,6.00 1.10,5.02 0.46,3.70 1.84,3.22 1.76,1.76 3.22,1.84 3.70,0.46 5.02,1.10" fill="#3897f0"/><path d="M3.3 6.2L5.3 7.9L8.7 4.3" fill="none" stroke="#fff" stroke-width="1.5"/></svg>
<div class="abs t" style="left:1252px;top:350px">•</div>
<div class="abs t b" style="left:1261px;top:350px;color:#3897f0">Follow</div>
<svg class="abs" style="left:1394px;top:358px" width="17" height="5" viewBox="0 0 17 5"><circle cx="2.4" cy="2.5" r="1.6" fill="#262626"/><circle cx="8.4" cy="2.5" r="1.6" fill="#262626"/><circle cx="14.5" cy="2.5" r="1.6" fill="#262626"/></svg>
<div class="abs hr" style="top:396px"></div>

<!-- actions -->
<div class="abs hr" style="top:625px"></div>
<svg class="abs" style="left:1109px;top:638px" width="24" height="24" viewBox="0 0 24 24" fill="none" stroke="#262626" stroke-width="1.35" stroke-linejoin="round"><path d="M12 22.3L3.9 14.9C1.7 12.8 0.7 10.8 0.7 8.3C0.7 4.5 3.5 1.7 6.9 1.7C9 1.7 11 2.9 12 4.9C13 2.9 15 1.7 17.1 1.7C20.5 1.7 23.3 4.5 23.3 8.3C23.3 10.8 22.3 12.8 20.1 14.9Z"/></svg>
<svg class="abs" style="left:1149px;top:638px" width="24" height="24" viewBox="0 0 24 24" fill="none" stroke="#262626" stroke-width="1.35" stroke-linejoin="round"><path d="M21.6 17.6A11.1 11.1 0 1 0 17.6 21.6L23.2 23.2Z"/></svg>
<svg class="abs" style="left:1189px;top:638px" width="24" height="24" viewBox="0 0 24 24" fill="none" stroke="#262626" stroke-width="1.35" stroke-linecap="round" stroke-linejoin="round"><path d="M11.5 0.8V15.6M6.5 5.7L11.5 0.7L16.5 5.7M1.9 11.4V20.1Q1.9 23.3 5.1 23.3H17.9Q21.1 23.3 21.1 20.1V11.4"/></svg>
<svg class="abs" style="left:1390px;top:638px" width="24" height="24" viewBox="0 0 24 24" fill="none" stroke="#262626" stroke-width="1.35" stroke-linejoin="round"><path d="M2.700 1.400Q2.700 0.700 3.400 0.700H19.500Q20.200 0.700 20.200 1.400V23L11.450 15.300L2.700 23Z"/></svg>
<div class="abs t b" style="left:1109px;top:668px">7,464 views</div>
<div class="abs" style="left:1109px;top:692px;font-size:10px;line-height:18px;letter-spacing:.2px;color:#999;white-space:nowrap">2 HOURS AGO</div>
<div class="abs hr" style="top:719px"></div>
<div class="abs t" style="left:1108px;top:737px;color:#999"><span style="color:#003569">Log in</span> to like or comment.</div>

<!-- FOOTER (under overlay) -->
<div id="footer" class="abs"><span>ABOUT US</span><span>SUPPORT</span><span>PRESS</span><span>API</span><span>JOBS</span><span>PRIVACY</span><span>TERMS</span><span>DIRECTORY</span><span>PROFILES</span><span>HASHTAGS</span><span>LANGUAGE</span></div>
<div id="copy" class="abs">© 2019 INSTAGRAM</div>

<!-- BOTTOM BAR -->
<div id="bar" class="abs"></div>
<svg class="abs" style="left:509px;top:996px" width="56" height="56" viewBox="0 0 56 56" fill="none" stroke="#fff"><circle cx="28" cy="28" r="27.150" stroke-width="1.700"/><rect x="14.5" y="14.5" width="27" height="27" rx="7" stroke-width="3"/><circle cx="28" cy="28" r="6.8" stroke-width="3"/><circle cx="36.2" cy="19.8" r="1.9" fill="#fff" stroke="none"/></svg>
<div class="abs b" style="left:576px;top:1002px;color:#fff;font-size:14px;line-height:18px;white-space:nowrap">Log In to Instagram</div>
<div class="abs" style="left:576px;top:1025px;color:#fff;font-size:14px;line-height:18px;white-space:nowrap">Log in to see photos and videos from friends and discover other accounts you'll love.</div>
<div id="bl" class="abs">Log In</div>
<div id="bs" class="abs">Sign Up</div>
<svg class="abs" style="left:1891px;top:987px" width="11" height="11" viewBox="0 0 11 11"><path d="M1.4 1.4L9.6 9.6M9.6 1.4L1.4 9.6" stroke="#a8a8ac" stroke-width="1.8" fill="none"/></svg>

</div>
</body>
</html>
